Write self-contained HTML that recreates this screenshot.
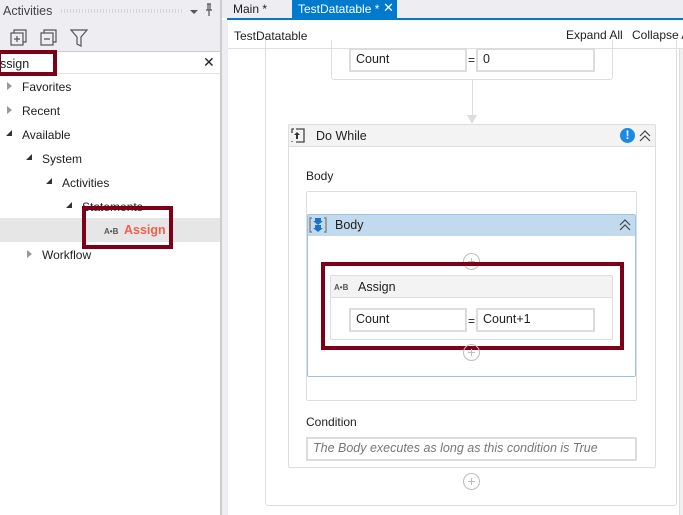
<!DOCTYPE html>
<html><head><style>
*{margin:0;padding:0;box-sizing:border-box}
body{width:683px;height:515px;overflow:hidden;background:#fff;font-family:"Segoe UI","Liberation Sans",sans-serif;font-size:12px;color:#1e1e1e;position:relative}
.a{position:absolute}
.t{position:absolute;white-space:nowrap;line-height:14px}
.fld{position:absolute;border:2px solid #dcdcdc;background:#fff;padding-left:5px;line-height:19px;font-size:12.5px}
.plus{position:absolute;width:17px;height:17px;border:1.5px solid #bdbdbd;border-radius:50%}
.plus:before{content:"";position:absolute;left:3.5px;top:6.5px;width:7px;height:1.5px;background:#bdbdbd}
.plus:after{content:"";position:absolute;left:6.5px;top:3.5px;width:1.5px;height:7px;background:#bdbdbd}
.red{position:absolute;border:3px solid #7d0018}
.tri{position:absolute;width:0;height:0}
</style></head><body>
<!-- left panel -->
<div class="a" style="left:0;top:0;width:220px;height:51px;background:#eeeef2"></div>
<div class="t" style="left:3px;top:4px;font-size:12.5px;color:#444">Activities</div>
<div class="a" style="left:60px;top:9px;width:123px;height:4px;background-image:radial-gradient(#b9b9c0 0.6px,transparent 0.8px);background-size:3px 2px"></div>
<div class="tri" style="left:190px;top:10px;border-left:4px solid transparent;border-right:4px solid transparent;border-top:4px solid #555"></div>
<svg class="a" style="left:204px;top:3px" width="10" height="14"><path d="M3 1h4M4 1v6M6 1v6M2 7h6M5 7v6" fill="none" stroke="#555" stroke-width="1.2"/></svg>
<svg class="a" style="left:8px;top:28px" width="85" height="20"><g fill="none" stroke="#555" stroke-width="1.2"><rect x="3" y="5" width="12" height="12"/><path d="M6 5V2h12v12h-3M6 11h6M9 8v6"/><rect x="33" y="5" width="12" height="12"/><path d="M36 5V2h12v12h-3M36 11h6"/><path d="M63 2h16l-6 7v9l-4-2V9z"/></g></svg>
<div class="a" style="left:0;top:51px;width:220px;height:1px;background:#ccc"></div>
<div class="t" style="left:0;top:57px;font-size:12.5px">ssign</div>
<div class="t" style="left:203px;top:55px;font-size:14px">✕</div>
<div class="a" style="left:0;top:73px;width:220px;height:1px;background:#e3e3e3"></div>
<div class="tri" style="left:7px;top:82px;border-top:4px solid transparent;border-bottom:4px solid transparent;border-left:5px solid #999"></div>
<div class="t" style="left:22px;top:80px">Favorites</div>
<div class="tri" style="left:7px;top:106px;border-top:4px solid transparent;border-bottom:4px solid transparent;border-left:5px solid #999"></div>
<div class="t" style="left:22px;top:104px">Recent</div>
<div class="tri" style="left:6px;top:130px;border-left:6px solid transparent;border-bottom:6px solid #333"></div>
<div class="t" style="left:22px;top:128px">Available</div>
<div class="tri" style="left:26px;top:154px;border-left:6px solid transparent;border-bottom:6px solid #333"></div>
<div class="t" style="left:42px;top:152px">System</div>
<div class="tri" style="left:46px;top:178px;border-left:6px solid transparent;border-bottom:6px solid #333"></div>
<div class="t" style="left:62px;top:176px">Activities</div>
<div class="tri" style="left:66px;top:202px;border-left:6px solid transparent;border-bottom:6px solid #333"></div>
<div class="t" style="left:82px;top:200px">Statements</div>
<div class="a" style="left:0;top:218px;width:220px;height:24px;background:#e6e6e6"></div>
<div class="t" style="left:104px;top:225px;font-size:8px;font-weight:bold;color:#555">A•B</div>
<div class="t" style="left:124px;top:223px;font-weight:bold;color:#f0604d;font-size:12.5px">Assign</div>
<div class="tri" style="left:27px;top:250px;border-top:4px solid transparent;border-bottom:4px solid transparent;border-left:5px solid #999"></div>
<div class="t" style="left:42px;top:248px">Workflow</div>
<div class="red" style="left:-3px;top:50px;width:60px;height:26px;border-width:4px"></div>
<div class="red" style="left:82px;top:206px;width:91px;height:43px;border-width:4px"></div>
<div class="a" style="left:220px;top:0;width:2px;height:515px;background:#ccc"></div>
<!-- right -->
<div class="a" style="left:222px;top:0;width:461px;height:18px;background:#eeeef2"></div>
<div class="t" style="left:233px;top:2px">Main *</div>
<div class="a" style="left:292px;top:0;width:105px;height:18px;background:#007acc"></div>
<div class="t" style="left:298px;top:2px;color:#fff">TestDatatable *</div>
<div class="t" style="left:383px;top:1px;color:#fff;font-size:13px">✕</div>
<div class="a" style="left:227px;top:18px;width:456px;height:2px;background:#007acc"></div>
<div class="a" style="left:222px;top:20px;width:6px;height:495px;background:#eeeef2"></div>
<div class="a" style="left:228px;top:48px;width:455px;height:1px;background:#e0e0e0"></div>
<div class="t" style="left:234px;top:29px">TestDatatable</div>
<div class="t" style="left:566px;top:28px">Expand All</div>
<div class="t" style="left:632px;top:28px">Collapse All</div>
<div class="a" style="left:679px;top:49px;width:4px;height:466px;background:#f0f0f0;border-left:1px solid #ddd"></div>
<!-- outer sequence -->
<div class="a" style="left:265px;top:40px;width:412px;height:466px;border:1px solid #ddd;border-top:none;border-radius:0 0 3px 3px"></div>
<div class="a" style="left:331px;top:40px;width:282px;height:40px;border:1px solid #ddd;border-top:none;border-radius:0 0 3px 3px"></div>
<div class="fld" style="left:349px;top:48px;width:118px;height:24px">Count</div>
<div class="t" style="left:468px;top:53px">=</div>
<div class="fld" style="left:476px;top:48px;width:119px;height:24px">0</div>
<div class="a" style="left:472px;top:80px;width:1px;height:38px;background:#ddd"></div>
<div class="tri" style="left:467px;top:115px;border-left:5px solid transparent;border-right:5px solid transparent;border-top:9px solid #ddd"></div>
<!-- do while -->
<div class="a" style="left:288px;top:124px;width:368px;height:344px;border:1px solid #ddd;border-radius:2px"></div>
<div class="a" style="left:289px;top:125px;width:366px;height:22px;background:#f3f3f3;border-bottom:1px solid #ddd"></div>
<svg class="a" style="left:291px;top:128px" width="16" height="16"><path d="M5 1h8v13H5M1 14v-1M1 5V1h2" fill="none" stroke="#444" stroke-width="1.3"/><path d="M6 4l-3 3h2v4h2V7h2z" fill="#333"/></svg>
<div class="t" style="left:316px;top:129px;font-size:12.5px">Do While</div>
<div class="a" style="left:620px;top:128px;width:15px;height:15px;border-radius:50%;background:#1c8ae2;color:#fff;font-weight:bold;text-align:center;line-height:15px;font-size:12px">!</div>
<svg class="a" style="left:638px;top:129px" width="14" height="14"><path d="M2 7l5-5 5 5M2 12l5-5 5 5" fill="none" stroke="#444" stroke-width="1.2"/></svg>
<div class="t" style="left:306px;top:169px">Body</div>
<div class="a" style="left:306px;top:191px;width:331px;height:210px;border:1px solid #ddd;border-radius:2px"></div>
<div class="a" style="left:307px;top:214px;width:329px;height:163px;border:1px solid #9dc3e6;border-radius:2px"></div>
<div class="a" style="left:308px;top:215px;width:327px;height:21px;background:#c2daee"></div>
<svg class="a" style="left:309px;top:216px" width="18" height="18"><path d="M3 2H1v14h2M15 2h2v14h-2" fill="none" stroke="#777" stroke-width="1.2"/><path d="M6 2h6v3h2l-5 4-5-4h2zM6 9h6v3h2l-5 4-5-4h2z" fill="#1b73c7"/></svg>
<div class="t" style="left:335px;top:218px;font-size:12.5px">Body</div>
<svg class="a" style="left:618px;top:218px" width="14" height="14"><path d="M2 7l5-5 5 5M2 12l5-5 5 5" fill="none" stroke="#444" stroke-width="1.2"/></svg>
<div class="plus" style="left:463px;top:253px"></div>
<div class="a" style="left:330px;top:275px;width:283px;height:65px;border:1px solid #ddd;border-radius:2px"></div>
<div class="a" style="left:331px;top:276px;width:281px;height:22px;background:#f3f3f3;border-bottom:1px solid #ddd"></div>
<div class="t" style="left:334px;top:281px;font-size:8px;font-weight:bold;color:#555">A•B</div>
<div class="t" style="left:358px;top:280px;font-size:12.5px">Assign</div>
<div class="fld" style="left:349px;top:308px;width:118px;height:24px">Count</div>
<div class="t" style="left:468px;top:314px">=</div>
<div class="fld" style="left:476px;top:308px;width:119px;height:24px">Count+1</div>
<div class="red" style="left:321px;top:262px;width:303px;height:88px;border-width:4px"></div>
<div class="plus" style="left:463px;top:344px"></div>
<div class="t" style="left:306px;top:415px">Condition</div>
<div class="fld" style="left:306px;top:437px;width:331px;height:24px;font-style:italic;color:#777">The Body executes as long as this condition is True</div>
<div class="plus" style="left:463px;top:473px"></div>
</body></html>
